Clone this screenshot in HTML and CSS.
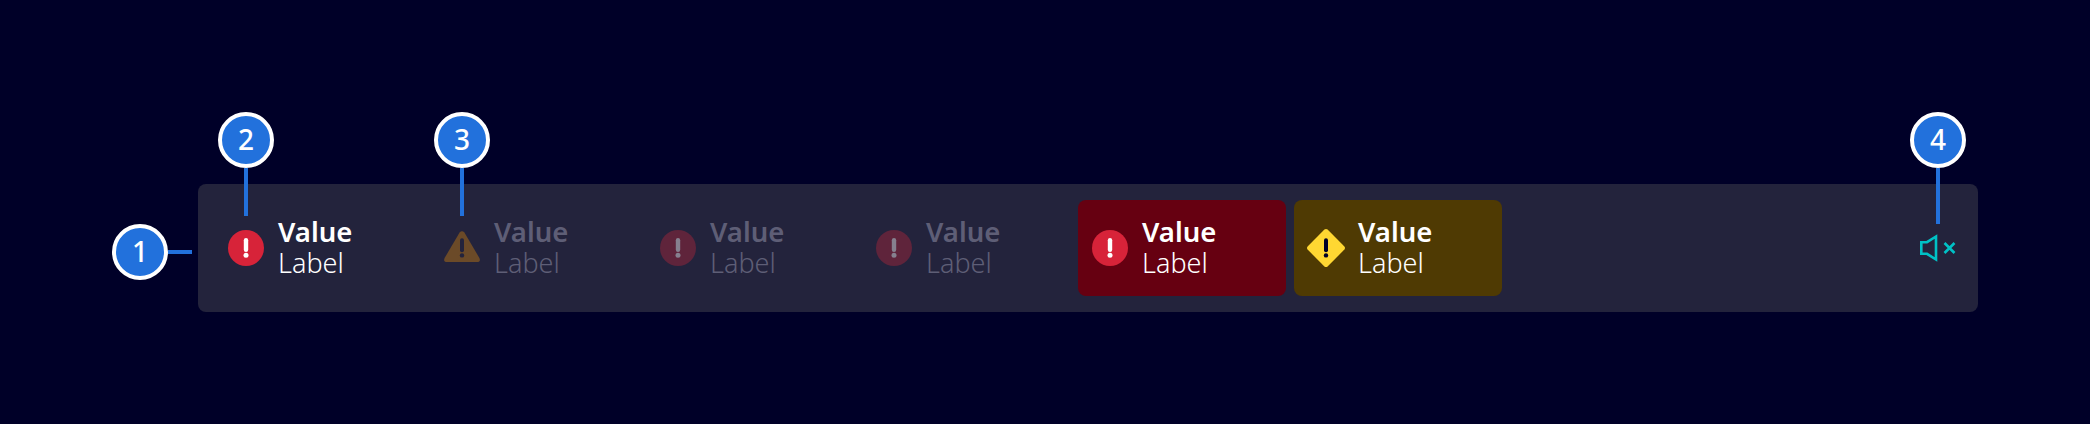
FILE: index.html
```html
<!DOCTYPE html>
<html lang="en">
<head>
    <meta charset="UTF-8">
    <title>Message bar</title>
    <link rel="stylesheet" href="styles.css">
</head>
<body>
    <div class="bar">
        <div class="item">
            <svg class="icon" viewBox="0 0 36 36"><circle cx="18" cy="18" r="18" fill="#d72339"/><rect x="15.8" y="8" width="4.4" height="14" rx="2.2" fill="#fff"/><circle cx="18" cy="25.2" r="2.5" fill="#fff"/></svg>
            <div class="text"><span class="value">Value</span><span class="label">Label</span></div>
        </div>
        <div class="item dim">
            <svg class="icon" viewBox="0 0 36 36"><path d="M15.6 2.6 Q18 -.2 20.4 2.6 L35.4 28 Q37 32 33 32 L3 32 Q-1 32 .6 28 Z" fill="#6b4a28"/><rect x="16" y="8.2" width="4" height="14" rx="2" fill="#23233c"/><circle cx="18" cy="25.4" r="2.2" fill="#23233c"/></svg>
            <div class="text"><span class="value">Value</span><span class="label">Label</span></div>
        </div>
        <div class="item dim">
            <svg class="icon" viewBox="0 0 36 36"><circle cx="18" cy="18" r="18" fill="#5f243b"/><rect x="15.8" y="8" width="4.4" height="14" rx="2.2" fill="#86808f"/><circle cx="18" cy="25.2" r="2.5" fill="#86808f"/></svg>
            <div class="text"><span class="value">Value</span><span class="label">Label</span></div>
        </div>
        <div class="item dim">
            <svg class="icon" viewBox="0 0 36 36"><circle cx="18" cy="18" r="18" fill="#5f243b"/><rect x="15.8" y="8" width="4.4" height="14" rx="2.2" fill="#86808f"/><circle cx="18" cy="25.2" r="2.5" fill="#86808f"/></svg>
            <div class="text"><span class="value">Value</span><span class="label">Label</span></div>
        </div>
        <div class="item alarm">
            <svg class="icon" viewBox="0 0 36 36"><circle cx="18" cy="18" r="18" fill="#d72339"/><rect x="15.8" y="8" width="4.4" height="14" rx="2.2" fill="#fff"/><circle cx="18" cy="25.2" r="2.5" fill="#fff"/></svg>
            <div class="text"><span class="value">Value</span><span class="label">Label</span></div>
        </div>
        <div class="item warning">
            <svg class="icon" viewBox="0 0 36 36"><path d="M16.4 -.4 Q18 -1.4 19.6 -.4 L36.4 16.4 Q37.6 18 36.4 19.6 L19.6 36.4 Q18 37.6 16.4 36.4 L-.4 19.6 Q-1.6 18 -.4 16.4 Z" fill="#ffd732"/><rect x="16" y="8.2" width="4" height="14" rx="2" fill="#000028"/><circle cx="18" cy="25.4" r="2.2" fill="#000028"/></svg>
            <div class="text"><span class="value">Value</span><span class="label">Label</span></div>
        </div>
        <div class="mute">
            <svg viewBox="0 0 36 28" width="36" height="28"><path d="M1.3 8.2 H7 L16 2.5 V25.5 L7 19.8 H1.3 Z" fill="none" stroke="#00c1c6" stroke-width="2.6"/><path d="M24.5 9 L34.5 19 M34.5 9 L24.5 19" fill="none" stroke="#00c1c6" stroke-width="2.6"/></svg>
        </div>
    </div>

    <!-- Numbered callouts on top of the bar -->
    <div class="callout c1">1</div>
    <div class="callout c2">2</div>
    <div class="callout c3">3</div>
    <div class="callout c4">4</div>
</body>
</html>
```

FILE: styles.css
```css
* {
    box-sizing: border-box;
    margin: 0;
    padding: 0;
}
body {
    position: relative;
    height: 424px;
    overflow: hidden;
    padding: 184px 112px 0 198px;
    background-color: #000028;
    font-family: "Noto Sans", sans-serif;
    color: #ffffff;
}

/* Bar */
.bar {
    display: flex;
    align-items: center;
    gap: 8px;
    height: 128px;
    padding: 0 16px;
    background-color: #23233c;
    border-radius: 8px;
}

.item {
    display: flex;
    align-items: center;
    gap: 14px;
    width: 208px;
    height: 96px;
    padding-left: 14px;
    border-radius: 8px;
}

.item.alarm {
    background-color: #660011;
}

.item.warning {
    background-color: #4f3a03;
}

.icon {
    width: 36px;
    height: 36px;
    flex-shrink: 0;
    overflow: visible;
}

.text {
    display: flex;
    flex-direction: column;
}

.value {
    font-size: 27.5px;
    font-weight: 600;
    line-height: 30px;
    margin-top: -1px;
}

.label {
    font-size: 27px;
    font-weight: 300;
    line-height: 32px;
    margin-bottom: -1px;
}

.dim .text {
    color: #5e5e76;
}

.mute {
    display: flex;
    margin-left: auto;
    margin-right: 6px;
}

/* Callouts */
.callout {
    position: absolute;
    width: 56px;
    height: 56px;
    border: 4px solid #ffffff;
    border-radius: 50%;
    background-color: #2271dc;
    font-size: 28px;
    font-weight: 500;
    line-height: 46px;
    text-align: center;
}

.callout::after {
    content: "";
    position: absolute;
    background-color: #2271dc;
}

.c1 {
    left: 112px;
    top: 224px;
}

.c1::after {
    left: 52px;
    top: 22px;
    width: 24px;
    height: 4px;
}

.c2 {
    left: 218px;
    top: 112px;
}

.c3 {
    left: 434px;
    top: 112px;
}

.c2::after,
.c3::after {
    left: 22px;
    top: 52px;
    width: 4px;
    height: 48px;
}

.c4 {
    left: 1910px;
    top: 112px;
}

.c4::after {
    left: 22px;
    top: 52px;
    width: 4px;
    height: 56px;
}
```
